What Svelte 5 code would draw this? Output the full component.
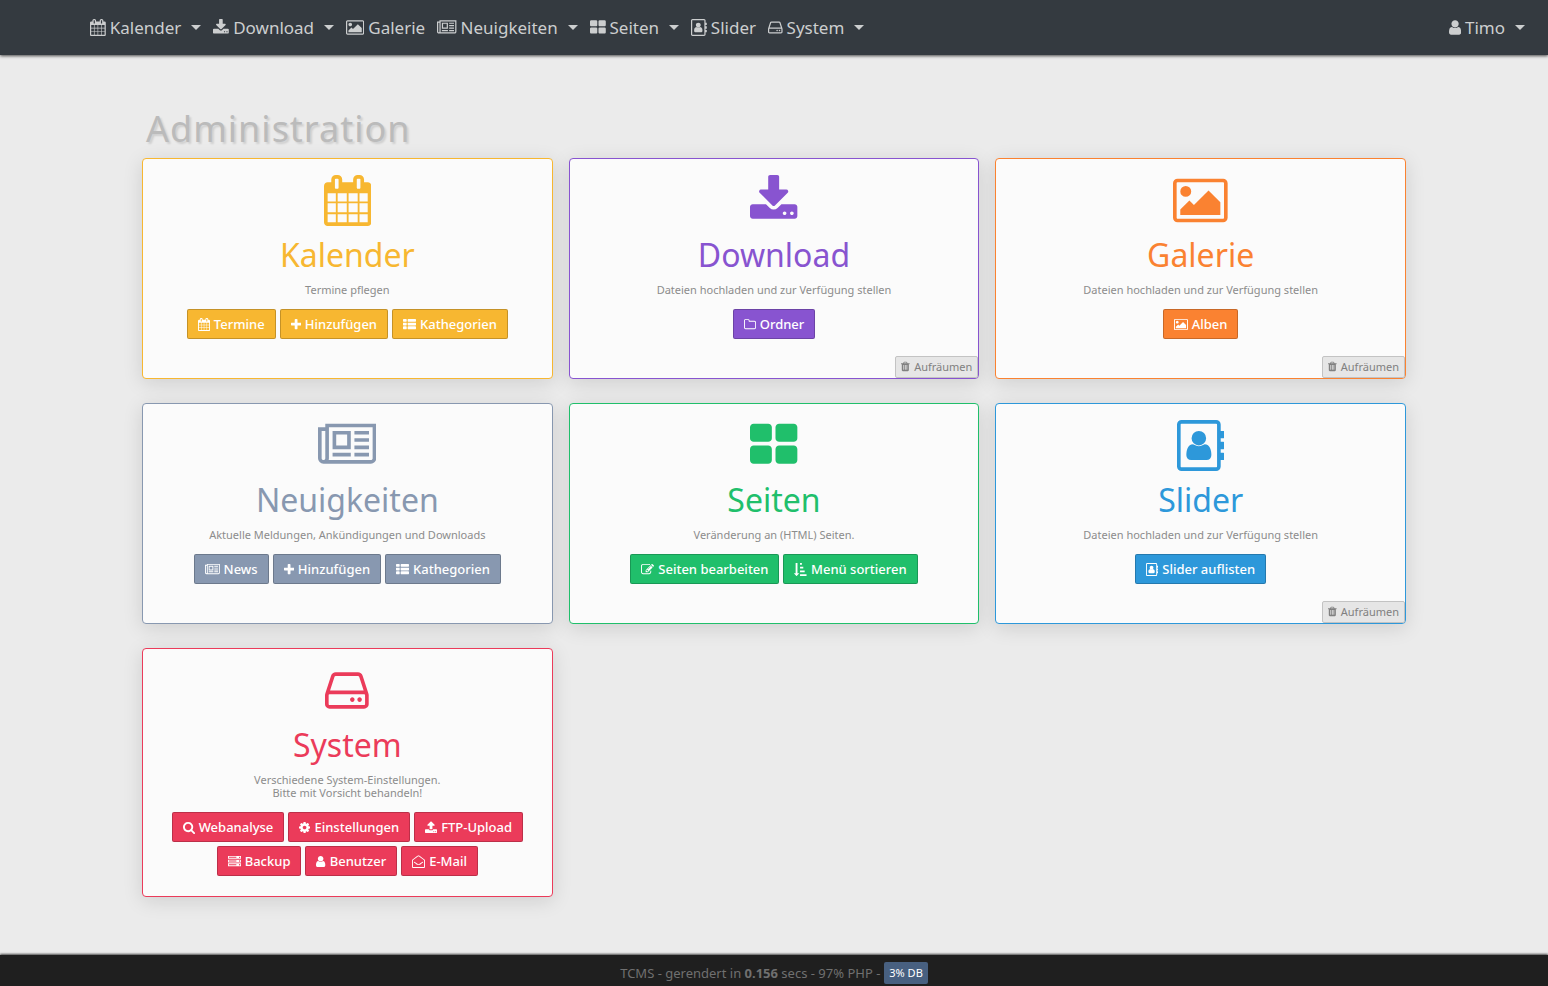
<script lang="ts">
  type Icon = { x: number; w: number; d: string };

  // Glyphs share a 1792 unit em, x and w crop each one to its own width
  const icons: Record<string, Icon> = {
    calendar: { x: 64, w: 1664, d: 'M192 1664h288v-288h-288v288zm352 0h320v-288h-320v288zm-352-352h288v-320h-288v320zm352 0h320v-320h-320v320zm-352-384h288v-288h-288v288zm736 736h320v-288h-320v288zm-384-736h320v-288h-320v288zm768 736h288v-288h-288v288zm-384-352h320v-320h-320v320zm-352-864v-288q0-13-9.5-22.5t-22.5-9.5h-64q-13 0-22.5 9.5t-9.5 22.5v288q0 13 9.5 22.5t22.5 9.5h64q13 0 22.5-9.5t9.5-22.5zm736 864h288v-320h-288v320zm-384-384h320v-288h-320v288zm384 0h288v-288h-288v288zm32-480v-288q0-13-9.5-22.5t-22.5-9.5h-64q-13 0-22.5 9.5t-9.5 22.5v288q0 13 9.5 22.5t22.5 9.5h64q13 0 22.5-9.5t9.5-22.5zm384-64v1280q0 52-38 90t-90 38h-1408q-52 0-90-38t-38-90v-1280q0-52 38-90t90-38h128v-96q0-66 47-113t113-47h64q66 0 113 47t47 113v96h384v-96q0-66 47-113t113-47h64q66 0 113 47t47 113v96h128q52 0 90 38t38 90z' },
    download: { x: 64, w: 1664, d: 'M1344 1344q0-26-19-45t-45-19-45 19-19 45 19 45 45 19 45-19 19-45zm256 0q0-26-19-45t-45-19-45 19-19 45 19 45 45 19 45-19 19-45zm128-224v320q0 40-28 68t-68 28h-1472q-40 0-68-28t-28-68v-320q0-40 28-68t68-28h465l135 136q58 56 136 56t136-56l136-136h464q40 0 68 28t28 68zm-325-569q17 41-14 70l-448 448q-18 19-45 19t-45-19l-448-448q-31-29-14-70 17-39 59-39h256v-448q0-26 19-45t45-19h256q26 0 45 19t19 45v448h256q42 0 59 39z' },
    picture: { x: -64, w: 1920, d: 'M576 576q0 80-56 136t-136 56-136-56-56-136 56-136 136-56 136 56 56 136zm1024 384v448h-1408v-192l320-320 160 160 512-512zm96-704h-1600q-13 0-22.5 9.5t-9.5 22.5v1216q0 13 9.5 22.5t22.5 9.5h1600q13 0 22.5-9.5t9.5-22.5v-1216q0-13-9.5-22.5t-22.5-9.5zm160 32v1216q0 66-47 113t-113 47h-1600q-66 0-113-47t-47-113v-1216q0-66 47-113t113-47h1600q66 0 113 47t47 113z' },
    newspaper: { x: 0, w: 2048, d: 'M1024 512H640v384h384zM1152 1152v128H512v-128zM1152 384v640H512V384zM1792 1152v128h-512v-128zM1792 896v128h-512V896zM1792 640v128h-512V640zM1792 384v128h-512V384zM256 1344V384H128v960q0 26 19 45t45 19 45-19 19-45zM1920 1344V256H384v1088q0 33-11 64h1483q26 0 45-19t19-45zM2048 128v1216q0 80-56 136t-136 56H192q-80 0-136-56T0 1344V256h256V128z' },
    tiles: { x: 64, w: 1664, d: 'M832 1024v384q0 52-38 90t-90 38h-512q-52 0-90-38t-38-90v-384q0-52 38-90t90-38h512q52 0 90 38t38 90zm0-768v384q0 52-38 90t-90 38h-512q-52 0-90-38t-38-90v-384q0-52 38-90t90-38h512q52 0 90 38t38 90zm896 768v384q0 52-38 90t-90 38h-512q-52 0-90-38t-38-90v-384q0-52 38-90t90-38h512q52 0 90 38t38 90zm0-768v384q0 52-38 90t-90 38h-512q-52 0-90-38t-38-90v-384q0-52 38-90t90-38h512q52 0 90 38t38 90z' },
    addressbook: { x: 0, w: 1664, d: 'M1024 640q0 106-75 181t-181 75-181-75-75-181 75-181 181-75 181 75 75 181zM1208 1232q0 76-48 126t-118 50H494q-70 0-118-50t-48-126q0-60 10-124t37-126 74-96 117-34q8 0 36 18 80 52 166 52t166-52q28-18 36-18 70 0 117 34t74 96 37 126 10 124zM1664 416v192q0 14-9 23t-23 9h-96v128h96q14 0 23 9t9 23v192q0 14-9 23t-23 9h-96v128h96q14 0 23 9t9 23v192q0 14-9 23t-23 9h-96v224q0 66-47 113t-113 47H160q-66 0-113-47T0 1632V160Q0 94 47 47T160 0h1216q66 0 113 47t47 113v224h96q14 0 23 9t9 23zM1408 1632V160q0-13-9.5-22.5T1376 128H160q-13 0-22.5 9.5T128 160v1472q0 13 9.5 22.5t22.5 9.5h1216q13 0 22.5-9.5t9.5-22.5z' },
    drive: { x: 128, w: 1536, d: 'M1168 1216q0 33-23.5 56.5t-56.5 23.5-56.5-23.5-23.5-56.5 23.5-56.5 56.5-23.5 56.5 23.5 23.5 56.5zm256 0q0 33-23.5 56.5t-56.5 23.5-56.5-23.5-23.5-56.5 23.5-56.5 56.5-23.5 56.5 23.5 23.5 56.5zm112 160v-320q0-13-9.5-22.5t-22.5-9.5h-1216q-13 0-22.5 9.5t-9.5 22.5v320q0 13 9.5 22.5t22.5 9.5h1216q13 0 22.5-9.5t9.5-22.5zm-1230-480h1180l-157-482q-4-13-16-21.5t-26-8.5h-782q-14 0-26 8.5t-16 21.5zm1358 160v320q0 66-47 113t-113 47h-1216q-66 0-113-47t-47-113v-320q0-25 16-75l197-606q17-53 63-86t101-33h782q55 0 101 33t63 86l197 606q16 50 16 75z' },
    user: { x: 256, w: 1280, d: 'M1536 1399q0 109-62.5 187t-150.5 78h-854q-88 0-150.5-78t-62.5-187q0-85 8.5-160.5t31.5-152 58.5-131 94-89 134.5-34.5q131 128 313 128t313-128q76 0 134.5 34.5t94 89 58.5 131 31.5 152 8.5 160.5zm-256-887q0 159-112.5 271.5t-271.5 112.5-271.5-112.5-112.5-271.5 112.5-271.5 271.5-112.5 271.5 112.5 112.5 271.5z' },
    plus: { x: 192, w: 1408, d: 'M1600 736v192q0 40-28 68t-68 28h-416v416q0 40-28 68t-68 28h-192q-40 0-68-28t-28-68v-416h-416q-40 0-68-28t-28-68v-192q0-40 28-68t68-28h416v-416q0-40 28-68t68-28h192q40 0 68 28t28 68v416h416q40 0 68 28t28 68z' },
    list: { x: 0, w: 1792, d: 'M512 1248v192q0 40-28 68t-68 28h-320q-40 0-68-28t-28-68v-192q0-40 28-68t68-28h320q40 0 68 28t28 68zm0-512v192q0 40-28 68t-68 28h-320q-40 0-68-28t-28-68v-192q0-40 28-68t68-28h320q40 0 68 28t28 68zm1280 512v192q0 40-28 68t-68 28h-960q-40 0-68-28t-28-68v-192q0-40 28-68t68-28h960q40 0 68 28t28 68zm-1280-1024v192q0 40-28 68t-68 28h-320q-40 0-68-28t-28-68v-192q0-40 28-68t68-28h320q40 0 68 28t28 68zm1280 512v192q0 40-28 68t-68 28h-960q-40 0-68-28t-28-68v-192q0-40 28-68t68-28h960q40 0 68 28t28 68zm0-512v192q0 40-28 68t-68 28h-960q-40 0-68-28t-28-68v-192q0-40 28-68t68-28h960q40 0 68 28t28 68z' },
    folder: { x: 64, w: 1664, d: 'M1600 1312v-704q0-40-28-68t-68-28h-704q-40 0-68-28t-28-68v-64q0-40-28-68t-68-28h-320q-40 0-68 28t-28 68v960q0 40 28 68t68 28h1216q40 0 68-28t28-68zm128-704v704q0 92-66 158t-158 66h-1216q-92 0-158-66t-66-158v-960q0-92 66-158t158-66h320q92 0 158 66t66 158v32h672q92 0 158 66t66 158z' },
    trash: { x: 192, w: 1408, d: 'M704 1376v-704q0-14-9-23t-23-9h-64q-14 0-23 9t-9 23v704q0 14 9 23t23 9h64q14 0 23-9t9-23zm256 0v-704q0-14-9-23t-23-9h-64q-14 0-23 9t-9 23v704q0 14 9 23t23 9h64q14 0 23-9t9-23zm256 0v-704q0-14-9-23t-23-9h-64q-14 0-23 9t-9 23v704q0 14 9 23t23 9h64q14 0 23-9t9-23zm-544-992h448l-48-117q-7-9-17-11h-317q-10 2-17 11zm928 32v64q0 14-9 23t-23 9h-96v948q0 83-47 143.5t-113 60.5h-832q-66 0-113-58.5t-47-141.5v-952h-96q-14 0-23-9t-9-23v-64q0-14 9-23t23-9h309l70-167q15-37 54-63t79-26h320q40 0 79 26t54 63l70 167h309q14 0 23 9t9 23z' },
    edit: { x: 0, w: 1792, d: 'M888 1184l116-116-152-152-116 116v56h96v96h56zm440-720q-16-16-33 1l-350 350q-17 17-1 33t33-1l350-350q17-17 1-33zm80 594v190q0 119-84.5 203.5t-203.5 84.5h-832q-119 0-203.5-84.5t-84.5-203.5v-832q0-119 84.5-203.5t203.5-84.5h832q63 0 117 25 15 7 18 23 3 17-9 29l-49 49q-14 14-32 8-23-6-45-6h-832q-66 0-113 47t-47 113v832q0 66 47 113t113 47h832q66 0 113-47t47-113v-126q0-13 9-22l64-64q15-15 35-7t20 29zm-96-738l288 288-672 672h-288v-288zm444 132l-92 92-288-288 92-92q28-28 68-28t68 28l152 152q28 28 28 68t-28 68z' },
    sort: { x: 32, w: 1728, d: 'M736 1440q0 12-10 24l-319 319q-10 9-23 9-12 0-23-9l-320-320q-15-16-7-35 8-20 30-20h192V32q0-14 9-23t23-9h192q14 0 23 9t9 23v1376h192q14 0 23 9t9 23zM864 0h256v256H864zM864 512h448v256H864zM864 1024h640v256H864zM864 1536h896v256H864z' },
    search: { x: 64, w: 1664, d: 'M1216 832q0-185-131.5-316.5t-316.5-131.5-316.5 131.5-131.5 316.5 131.5 316.5 316.5 131.5 316.5-131.5 131.5-316.5zm512 832q0 52-38 90t-90 38q-54 0-90-38l-343-342q-179 124-399 124-143 0-273.5-55.5t-225-150-150-225-55.5-273.5 55.5-273.5 150-225 225-150 273.5-55.5 273.5 55.5 225 150 150 225 55.5 273.5q0 220-124 399l343 343q37 37 37 90z' },
    cog: { x: 128, w: 1536, d: 'M1152 896q0-106-75-181t-181-75-181 75-75 181 75 181 181 75 181-75 75-181zm512-109v222q0 12-8 23t-20 13l-185 28q-19 54-39 91 35 50 107 138 10 12 10 25t-9 23q-27 37-99 108t-94 71q-12 0-26-9l-138-108q-44 23-91 38-16 136-29 186-7 28-36 28h-222q-14 0-24.5-8.5t-11.5-21.5l-28-184q-49-16-90-37l-141 107q-10 9-25 9-14 0-25-11-126-114-165-168-7-10-7-23 0-12 8-23 15-21 51-66.5t54-70.5q-27-50-41-99l-183-27q-13-2-21-12.5t-8-23.5v-222q0-12 8-23t19-13l186-28q14-46 39-92-40-57-107-138-10-12-10-24 0-10 9-23 26-36 98.5-107.5t94.5-71.5q13 0 26 10l138 107q44-23 91-38 16-136 29-186 7-28 36-28h222q14 0 24.5 8.5t11.5 21.5l28 184q49 16 90 37l142-107q9-9 24-9 13 0 25 10 129 119 165 170 7 8 7 22 0 12-8 23-15 21-51 66.5t-54 70.5q26 50 41 98l183 28q13 2 21 12.5t8 23.5z' },
    upload: { x: 64, w: 1664, d: 'M1344 1472q0-26-19-45t-45-19-45 19-19 45 19 45 45 19 45-19 19-45zm256 0q0-26-19-45t-45-19-45 19-19 45 19 45 45 19 45-19 19-45zm128-224v320q0 40-28 68t-68 28h-1472q-40 0-68-28t-28-68v-320q0-40 28-68t68-28h427q21 56 70.5 92t110.5 36h256q61 0 110.5-36t70.5-92h427q40 0 68 28t28 68zm-325-648q-17 40-59 40h-256v448q0 26-19 45t-45 19h-256q-26 0-45-19t-19-45v-448h-256q-42 0-59-40-17-39 14-69l448-448q18-19 45-19t45 19l448 448q31 30 14 69z' },
    server: { x: 0, w: 1792, d: 'M128 1408h1024v-128H128zM128 896h1024V768H128zM128 384h1024V256H128zM1696 1344a96 96 0 1 0-192 0 96 96 0 1 0 192 0zM1696 832a96 96 0 1 0-192 0 96 96 0 1 0 192 0zM1696 320a96 96 0 1 0-192 0 96 96 0 1 0 192 0zM1792 1152v384H0v-384zM1792 640v384H0V640zM1792 128v384H0V128z' },
    mail: { x: 0, w: 1792, d: 'M1792 710v922q0 66-47 113t-113 47H160q-66 0-113-47T0 1632V710q0-42 34-70 160-130 580-444 96-74 152-104T896 52t130 40 152 104q420 314 580 444 34 28 34 70zM1664 1632V725q-160-128-562-428-84-64-130-91t-76-27-76 27-130 91q-402 300-562 428v907q0 13 9.5 22.5t22.5 9.5h1472q13 0 22.5-9.5t9.5-22.5zM300 930q18-20 42-4 150 110 312 226 80 58 126 83t116 25 116-25 126-83q162-116 312-226 24-16 42 4l38 54q14 24-8 42-150 110-320 232-92 66-158 98t-148 32-148-32-158-98q-170-122-320-232-22-18-8-42z' }
  };

  const menu = [
    { label: 'Kalender', icon: 'calendar', dropdown: true },
    { label: 'Download', icon: 'download', dropdown: true },
    { label: 'Galerie', icon: 'picture', dropdown: false },
    { label: 'Neuigkeiten', icon: 'newspaper', dropdown: true },
    { label: 'Seiten', icon: 'tiles', dropdown: true },
    { label: 'Slider', icon: 'addressbook', dropdown: false },
    { label: 'System', icon: 'drive', dropdown: true }
  ];

  const cards = [
    {
      title: 'Kalender',
      icon: 'calendar',
      theme: 'yellow',
      text: ['Termine pflegen'],
      actions: [
        ['calendar', 'Termine'],
        ['plus', 'Hinzufügen'],
        ['list', 'Kathegorien']
      ],
      cleanup: false
    },
    {
      title: 'Download',
      icon: 'download',
      theme: 'purple',
      text: ['Dateien hochladen und zur Verfügung stellen'],
      actions: [['folder', 'Ordner']],
      cleanup: true
    },
    {
      title: 'Galerie',
      icon: 'picture',
      theme: 'orange',
      text: ['Dateien hochladen und zur Verfügung stellen'],
      actions: [['picture', 'Alben']],
      cleanup: true
    },
    {
      title: 'Neuigkeiten',
      icon: 'newspaper',
      theme: 'slate',
      text: ['Aktuelle Meldungen, Ankündigungen und Downloads'],
      actions: [
        ['newspaper', 'News'],
        ['plus', 'Hinzufügen'],
        ['list', 'Kathegorien']
      ],
      cleanup: false
    },
    {
      title: 'Seiten',
      icon: 'tiles',
      theme: 'green',
      text: ['Veränderung an (HTML) Seiten.'],
      actions: [
        ['edit', 'Seiten bearbeiten'],
        ['sort', 'Menü sortieren']
      ],
      cleanup: false
    },
    {
      title: 'Slider',
      icon: 'addressbook',
      theme: 'blue',
      text: ['Dateien hochladen und zur Verfügung stellen'],
      actions: [['addressbook', 'Slider auflisten']],
      cleanup: true
    },
    {
      title: 'System',
      icon: 'drive',
      theme: 'red',
      text: ['Verschiedene System-Einstellungen.', 'Bitte mit Vorsicht behandeln!'],
      actions: [
        ['search', 'Webanalyse'],
        ['cog', 'Einstellungen'],
        ['upload', 'FTP-Upload'],
        ['server', 'Backup'],
        ['user', 'Benutzer'],
        ['mail', 'E-Mail']
      ],
      cleanup: false
    }
  ];
</script>

{#snippet glyph(name: string)}
  <svg class="icon" viewBox="{icons[name].x} 0 {icons[name].w} 1792" aria-hidden="true">
    <path fill="currentColor" fill-rule="evenodd" d={icons[name].d} />
  </svg>
{/snippet}

<div class="page">
  <nav class="navbar">
    <ul class="nav-list">
      {#each menu as item}
        <li>
          <a class="nav-link" href="#{item.label.toLowerCase()}">
            {@render glyph(item.icon)}
            <span>{item.label}</span>
            {#if item.dropdown}<span class="caret"></span>{/if}
          </a>
        </li>
      {/each}
    </ul>
    <a class="nav-link" href="#profil">
      {@render glyph('user')}
      <span>Timo</span>
      <span class="caret"></span>
    </a>
  </nav>

  <main class="content">
    <h1>Administration</h1>
    <div class="cards">
      {#each cards as card}
        <section class="card {card.theme}" id={card.title.toLowerCase()}>
          <div class="card-icon">{@render glyph(card.icon)}</div>
          <h2>{card.title}</h2>
          <p>
            {#each card.text as line}
              <span class="line">{line}</span>
            {/each}
          </p>
          <div class="actions">
            {#each card.actions as [icon, label]}
              <button type="button" class="btn">
                {@render glyph(icon)}
                <span>{label}</span>
              </button>
            {/each}
          </div>
          {#if card.cleanup}
            <button type="button" class="cleanup">
              {@render glyph('trash')}
              <span>Aufräumen</span>
            </button>
          {/if}
        </section>
      {/each}
    </div>
  </main>

  <footer class="footer">
    <span>TCMS - gerendert in <strong>0.156</strong> secs - 97% PHP -</span>
    <span class="badge">3% DB</span>
  </footer>
</div>

<style>
  :global(body) {
    background: #ebebeb;
  }

  .page {
    display: flex;
    flex-direction: column;
    min-height: 100vh;
    font-family: 'Noto Sans', 'Open Sans', sans-serif;
    font-size: 16px;
  }

  .icon {
    display: block;
    flex: none;
    height: 1em;
  }

  /* Top navigation */
  .navbar {
    display: flex;
    justify-content: space-between;
    align-items: center;
    height: 55px;
    padding: 0 17px 0 84px;
    background: #343a40;
    box-shadow: 0 1px 3px rgba(0, 0, 0, 0.7);
  }

  .nav-list {
    display: flex;
    margin: 0;
    padding: 0;
    list-style: none;
  }

  .nav-link {
    display: flex;
    align-items: center;
    gap: 4px;
    padding: 0 6px;
    color: #cccecf;
    font-size: 17px;
    line-height: 24px;
    text-decoration: none;
  }

  .caret {
    margin-left: 6px;
    border: 5px solid transparent;
    border-top-color: currentColor;
    border-bottom: 0;
  }

  /* Dashboard */
  .content {
    flex: 1;
    box-sizing: border-box;
    width: 100%;
    max-width: 1312px;
    margin: 0 auto;
    padding: 48px 24px;
  }

  h1 {
    margin: 0 4px 4px;
    color: #bbbbbb;
    font-size: 36px;
    font-weight: 400;
    line-height: 51px;
    letter-spacing: 1px;
    text-shadow: 2px 2px 2px rgba(0, 0, 0, 0.12);
  }

  .cards {
    display: grid;
    grid-template-columns: repeat(auto-fill, minmax(400px, 1fr));
    gap: 24px 16px;
  }

  .card {
    position: relative;
    box-sizing: border-box;
    min-height: 221px;
    padding: 16px 16px 20px;
    background: #fbfbfb;
    border: 1px solid var(--theme);
    border-radius: 4px;
    box-shadow: 0 4px 20px rgba(0, 0, 0, 0.12);
    text-align: center;
  }

  .yellow { --theme: #f7b731; }
  .purple { --theme: #8854d0; }
  .orange { --theme: #fa8231; }
  .slate { --theme: #8898b0; }
  .green { --theme: #20bf6b; }
  .blue { --theme: #2d98da; }
  .red { --theme: #eb3b5a; }

  .card-icon {
    display: flex;
    justify-content: center;
    color: var(--theme);
    font-size: 51px;
  }

  h2 {
    margin: 8px 0 7px;
    color: var(--theme);
    font-size: 32px;
    font-weight: 400;
    line-height: 42px;
  }

  p {
    margin: 0 0 13px;
    color: #8c8c8c;
    font-size: 11px;
    line-height: 13px;
  }

  .line {
    display: block;
  }

  .actions {
    display: flex;
    flex-wrap: wrap;
    justify-content: center;
    gap: 4px;
  }

  .btn {
    display: flex;
    align-items: center;
    gap: 4px;
    box-sizing: border-box;
    height: 30px;
    padding: 0 10px;
    background: var(--theme);
    border: 1px solid rgba(0, 0, 0, 0.2);
    border-radius: 2px;
    color: #ffffff;
    font-family: inherit;
    font-size: 13px;
    font-weight: 500;
    cursor: pointer;
  }

  .cleanup {
    position: absolute;
    right: 0;
    bottom: 0;
    display: flex;
    align-items: center;
    gap: 4px;
    height: 22px;
    padding: 0 5px 1px;
    background: #e6e6e6;
    border: 1px solid #c3c3c3;
    border-radius: 2px;
    color: #808080;
    font-family: inherit;
    font-size: 11px;
    cursor: pointer;
  }

  /* Render statistics */
  .footer {
    display: flex;
    justify-content: center;
    align-items: center;
    gap: 4px;
    height: 26px;
    padding-top: 5px;
    background: #1f1f1f;
    box-shadow: 0 -1px 2px rgba(0, 0, 0, 0.7);
    color: #707070;
    font-size: 13px;
  }

  .badge {
    padding: 0 5px;
    background: #486080;
    border-radius: 2px;
    color: #ffffff;
    font-size: 11px;
    line-height: 22px;
  }
</style>
